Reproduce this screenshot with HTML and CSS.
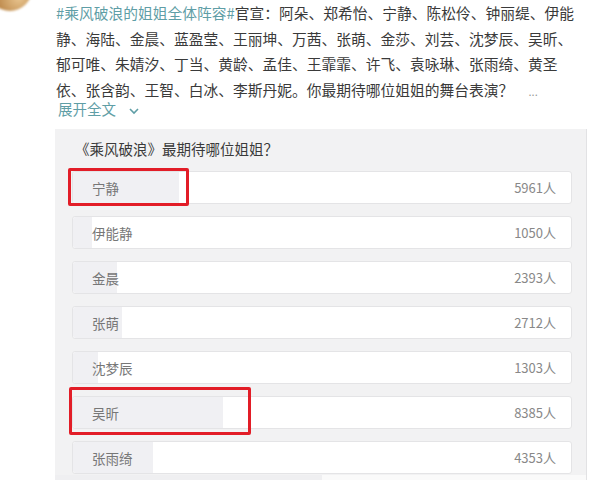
FILE: index.html
```html
<!DOCTYPE html>
<html lang="zh-CN">
<head>
    <meta charset="UTF-8">
    <meta name="viewport" content="width=device-width, initial-scale=1.0">
    <title>乘风破浪的姐姐</title>
    <link rel="stylesheet" href="styles.css">
</head>
<body>
    <main class="feed">
        <div class="avatarCol">
            <div class="avatar"></div>
        </div>
        <div class="content">
            <p class="postText">
                <a class="tag">#乘风破浪的姐姐全体阵容#</a>官宣：阿朵、郑希怡、宁静、陈松伶、钟丽缇、伊能<br>静、海陆、金晨、蓝盈莹、王丽坤、万茜、张萌、金莎、刘芸、沈梦辰、吴昕、<br>郁可唯、朱婧汐、丁当、黄龄、孟佳、王霏霏、许飞、袁咏琳、张雨绮、黄圣<br>依、张含韵、王智、白冰、李斯丹妮。你最期待哪位姐姐的舞台表演？ <span class="dots">...</span>
            </p>
            <p class="expand">展开全文<svg class="chevron" width="12" height="8" viewBox="0 0 12 8"><path d="M2 2 L6 6 L10 2" fill="none" stroke="#5f9ea6" stroke-width="1.6"/></svg></p>

            <!-- the poll card -->
            <section class="poll">
                <h2 class="pollTitle">《乘风破浪》最期待哪位姐姐？</h2>
                <div class="options">
                    <div class="option">
                        <div class="fill" style="width: 21.3%"></div>
                        <span class="name">宁静</span>
                        <span class="count">5961人</span>
                        <div class="mark markOne"></div>
                    </div>
                    <div class="option">
                        <div class="fill" style="width: 3.8%"></div>
                        <span class="name">伊能静</span>
                        <span class="count">1050人</span>
                    </div>
                    <div class="option">
                        <div class="fill" style="width: 8.9%"></div>
                        <span class="name">金晨</span>
                        <span class="count">2393人</span>
                    </div>
                    <div class="option">
                        <div class="fill" style="width: 9.9%"></div>
                        <span class="name">张萌</span>
                        <span class="count">2712人</span>
                    </div>
                    <div class="option">
                        <div class="fill" style="width: 5%"></div>
                        <span class="name">沈梦辰</span>
                        <span class="count">1303人</span>
                    </div>
                    <div class="option">
                        <div class="fill" style="width: 30.1%"></div>
                        <span class="name">吴昕</span>
                        <span class="count">8385人</span>
                        <div class="mark markTwo"></div>
                    </div>
                    <div class="option">
                        <div class="fill" style="width: 16%"></div>
                        <span class="name">张雨绮</span>
                        <span class="count">4353人</span>
                    </div>
                </div>
                <div class="pollMore"></div>
            </section>
        </div>
    </main>
</body>
</html>
```

FILE: styles.css
```css
/* page basics */
body {
    margin: 0;
    background-color: #fff;
    color: #333;
    font-family: "Noto Sans CJK SC", "Noto Sans", sans-serif;
    overflow: hidden;
}

/* avatar column + content column */
.feed {
    display: flex;
}

.avatarCol {
    width: 56px;
    flex-shrink: 0;
}

/* only the bottom of the avatar shows at the top edge */
.avatar {
    width: 44px;
    height: 44px;
    margin: -33px 0 0 -12px;
    border-radius: 50%;
    background: radial-gradient(circle at 70% 70%, #e9c58f, #b98446 55%, #5a4030);
    filter: blur(1px);
}

.content {
    flex: 1;
}

/* the post text */
.postText {
    margin: 0;
    font-size: 14.75px;
    line-height: 25.5px;
    color: #3a3a3a;
    white-space: nowrap;
}

.tag,
.expand {
    color: #5f9ea6;
    text-decoration: none;
}

.dots {
    color: #999;
    font-size: 11px;
    margin-left: 12px;
}

.expand {
    margin: -5px 0 0 2px;
    font-size: 14.5px;
    line-height: 20px;
}

/* small down arrow after the link text */
.chevron {
    display: inline-block;
    vertical-align: middle;
    margin-left: 12px;
}

/* poll card */
.poll {
    margin: 10px 0 0 -1px;
    width: 532px;
    padding: 10px 14px 0 17px;
    box-sizing: border-box;
    background-color: #f2f2f3;
    border-right: 1px solid #e2e2e4;
}

.pollTitle {
    margin: 0 0 12px 3px;
    font-size: 14.5px;
    font-weight: normal;
    line-height: 20px;
    color: #3a3a3a;
}

.options {
    display: flex;
    flex-direction: column;
    gap: 12px;
}

.option {
    position: relative;
    display: flex;
    align-items: center;
    justify-content: space-between;
    height: 33px;
    padding: 0 15px 0 19px;
    box-sizing: border-box;
    background-color: #fff;
    border: 1px solid #e4e4e6;
    border-radius: 3px;
}

/* vote share bar behind the label */
.fill {
    position: absolute;
    left: 0;
    top: 0;
    bottom: 0;
    background-color: #f0f0f3;
    border-radius: 3px 0 0 3px;
}

.name,
.count {
    position: relative;
    font-size: 13.5px;
    color: #777;
}

.count {
    font-size: 13px;
    color: #888;
}

/* red highlight frames drawn over the options */
.mark {
    position: absolute;
    border: 3px solid #e21d27;
    border-radius: 2px;
}

.markOne {
    left: -5px;
    top: -4px;
    width: 115px;
    height: 32px;
}

.markTwo {
    left: -4px;
    top: -10px;
    width: 176px;
    height: 42px;
}

.pollMore {
    height: 12px;
    margin: 1px -14px 0 -17px;
    background: linear-gradient(to right, #efeff1 267px, #fafafa 267px);
}
```
